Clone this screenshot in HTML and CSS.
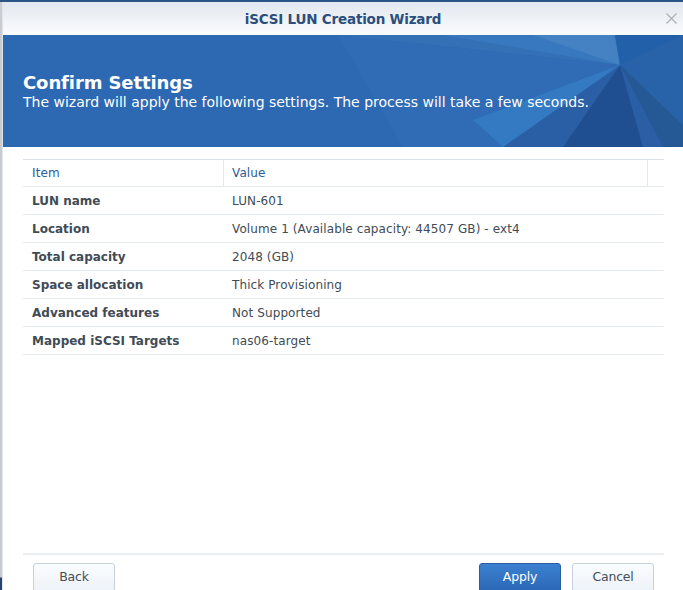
FILE: index.html
```html
<!DOCTYPE html>
<html>
<head>
<meta charset="utf-8">
<link rel="stylesheet" href="styles.css">
</head>
<body>
<div class="screen">
  <div class="topline"></div>
  <div class="main">
    <div class="edge"></div>
    <div class="dialog">
      <div class="titlebar">
        <span class="title">iSCSI LUN Creation Wizard</span>
        <span class="close">
          <svg width="13" height="13" viewBox="0 0 13 13"><path d="M1.5 1.5L11.5 11.5M11.5 1.5L1.5 11.5" stroke="#b0b4b9" stroke-width="1.4" fill="none"/></svg>
        </span>
      </div>
      <div class="banner">
        <svg class="banner-art" width="680" height="112" viewBox="0 0 680 112" preserveAspectRatio="none">
          <polygon points="335,0 600,0 617,30" fill="#3370b6"/>
          <polygon points="335,0 400,112 520,112 617,30" fill="#2f6cb5"/>
          <polygon points="440,0 610,0 617,30" fill="#3a7bc0" opacity="0.8"/>
          <polygon points="530,0 612,0 617,30" fill="#4a86c4" opacity="0.7"/>
          <polygon points="617,30 500,112 680,112" fill="#2a5fa6"/>
          <polygon points="617,30 560,112 640,112" fill="#1f4f91"/>
          <polygon points="617,30 680,0 680,112" fill="#2862a8"/>
          <polygon points="612,0 680,0 617,30" fill="#2360aa"/>
          <polygon points="617,30 470,85 500,112" fill="#3580c8" opacity="0.7"/>
          <polygon points="617,30 660,112 680,112 680,90" fill="#255995"/>
        </svg>
        <div class="banner-text">
          <h1>Confirm Settings</h1>
          <p>The wizard will apply the following settings. The process will take a few seconds.</p>
        </div>
      </div>
      <div class="content">
        <div class="grid">
          <div class="row head">
            <div class="c1">Item</div>
            <div class="c2">Value</div>
            <div class="c3"></div>
          </div>
          <div class="row"><div class="c1 b">LUN name</div><div class="c2">LUN-601</div></div>
          <div class="row"><div class="c1 b">Location</div><div class="c2">Volume 1 (Available capacity: 44507 GB) - ext4</div></div>
          <div class="row"><div class="c1 b">Total capacity</div><div class="c2">2048 (GB)</div></div>
          <div class="row"><div class="c1 b">Space allocation</div><div class="c2">Thick Provisioning</div></div>
          <div class="row"><div class="c1 b">Advanced features</div><div class="c2">Not Supported</div></div>
          <div class="row"><div class="c1 b">Mapped iSCSI Targets</div><div class="c2">nas06-target</div></div>
        </div>
      </div>
      <div class="footer">
        <button class="btn">Back</button>
        <div class="spacer"></div>
        <button class="btn primary">Apply</button>
        <button class="btn">Cancel</button>
      </div>
    </div>
  </div>
</div>
</body>
</html>
```
FILE: styles.css
```css
html, body {
  margin: 0;
  padding: 0;
  background: #ffffff;
  font-family: "DejaVu Sans", Verdana, sans-serif;
  overflow: hidden;
}
.screen {
  width: 683px;
  height: 590px;
  display: flex;
  flex-direction: column;
  overflow: hidden;
}
.topline {
  height: 2px;
  background: #2c5486;
  flex: none;
}
.main {
  flex: 1;
  display: flex;
  min-height: 0;
}
.edge {
  width: 3px;
  flex: none;
  background: linear-gradient(to bottom, #c9ccd0 0, #c9ccd0 575px, #24456f 576px, #24456f 100%);
  border-right: 1px solid #e2e5e8;
  box-sizing: border-box;
}
.dialog {
  flex: 1;
  display: flex;
  flex-direction: column;
  background: #fff;
  min-height: 0;
}
.titlebar {
  height: 33px;
  flex: none;
  background: linear-gradient(to bottom, #e1e7ef, #fbfcfe);
  display: flex;
  align-items: center;
  justify-content: center;
  position: relative;
}
.title {
  font-size: 13.5px;
  font-weight: bold;
  color: #2b4e7c;
  letter-spacing: -0.2px;
}
.close {
  position: absolute;
  right: 5px;
  top: 10px;
  width: 13px;
  height: 13px;
  display: flex;
}
.banner {
  height: 112px;
  flex: none;
  background: #2d69b2;
  position: relative;
  overflow: hidden;
}
.banner-art {
  position: absolute;
  left: 0;
  top: 0;
}
.banner-text {
  position: relative;
  padding: 37px 0 0 20px;
  color: #fff;
}
.banner-text h1 {
  margin: 0;
  font-size: 18px;
  line-height: 22px;
  font-weight: bold;
  letter-spacing: -0.1px;
}
.banner-text p {
  margin: 0;
  font-size: 14px;
  line-height: 17px;
  letter-spacing: 0;
}
.content {
  flex: 1;
  padding: 12px 19px 0 20px;
}
.grid {
  border-top: 1px solid #dde3ea;
}
.row {
  display: flex;
  height: 28px;
  border-bottom: 1px solid #e5eaf0;
  box-sizing: border-box;
  font-size: 12px;
  color: #414b55;
  align-items: center;
  letter-spacing: 0.1px;
}
.row.head {
  height: 27px;
  color: #2b5b97;
}
.c1 {
  width: 200px;
  padding-left: 9px;
  box-sizing: border-box;
  align-self: stretch;
  display: flex;
  align-items: center;
}
.head .c1 {
  width: 201px;
  border-right: 1px solid #e3e8ee;
}
.c2 {
  flex: 1;
  padding-left: 9px;
}
.head .c2 {
  padding-left: 8px;
}
.c3 {
  width: 16px;
  align-self: stretch;
  border-left: 1px solid #e3e8ee;
}
.b {
  font-weight: bold;
  letter-spacing: 0;
}
.footer {
  flex: none;
  height: 37px;
  box-sizing: border-box;
  margin: 0 19px 0 20px;
  border-top: 2px solid #eceff2;
  display: flex;
  align-items: flex-start;
  padding: 8px 10px 0 10px;
  gap: 11px;
}
.spacer {
  flex: 1;
}
.btn {
  flex: none;
  width: 82px;
  height: 30px;
  border: 1px solid #c7d0da;
  border-radius: 3px;
  background: linear-gradient(to bottom, #fbfdff, #edf2f8);
  font-family: "DejaVu Sans", Verdana, sans-serif;
  font-size: 12.5px;
  color: #444e58;
  letter-spacing: -0.2px;
  padding: 0 0 3px 0;
}
.btn.primary {
  background: linear-gradient(to bottom, #3c80d1, #2a67b4);
  border-color: #2a5da3;
  color: #fff;
}
```
